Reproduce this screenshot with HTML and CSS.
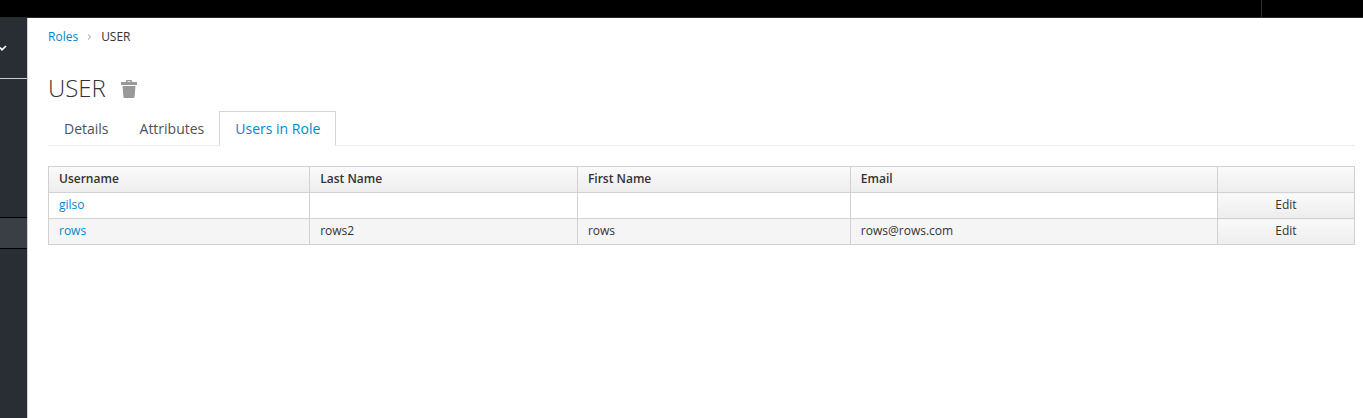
FILE: index.html
```html
<!DOCTYPE html>
<html lang="en">
<head>
<meta charset="utf-8">
<title>USER - Users in Role</title>
<link rel="stylesheet" href="styles.css">
</head>
<body>
<header class="topbar"><div class="topbar-user"></div></header>
<div class="layout">
  <nav class="sidebar" aria-label="Realm">
    <button class="realm-toggle" type="button" aria-label="Select realm">
      <svg width="8" height="8" viewBox="0 0 8 8" aria-hidden="true"><path d="M0 3.5 L2 5.8 L6 2" fill="none" stroke="#fff" stroke-width="1.7"/></svg>
    </button>
    <a class="nav-active" href="#" aria-label="Roles"></a>
  </nav>
  <main class="content">
    <ol class="breadcrumb">
      <li><a href="#">Roles</a></li>
      <li><svg class="separator" width="5" height="8" viewBox="0 0 5 8" aria-hidden="true"><path d="M1 1.5 L3.7 4 L1 6.5" fill="none" stroke="#9c9c9c"/></svg></li>
      <li>USER</li>
    </ol>
    <div class="title-row">
      <h1>USER</h1>
      <button class="delete" type="button" aria-label="Delete role">
        <svg width="16" height="18" viewBox="0 0 16 18" aria-hidden="true"><path fill="#999" fill-rule="evenodd" d="M0 2H5V1Q5 0 6 0H10Q11 0 11 1V2H16V5H0ZM6.5 1.3V2H9.5V1.3ZM1.5 6H14.5L13.5 17Q13.4 18 12.5 18H3.5Q2.6 18 2.5 17Z"/></svg>
      </button>
    </div>
    <ul class="tabs">
      <li><a class="tab" href="#">Details</a></li>
      <li><a class="tab" href="#">Attributes</a></li>
      <li><a class="tab active" href="#" aria-current="page">Users in Role</a></li>
    </ul>
    <table class="users">
      <colgroup><col class="col-username"><col class="col-last"><col class="col-first"><col class="col-email"><col class="col-action"></colgroup>
      <thead>
        <tr><th>Username</th><th>Last Name</th><th>First Name</th><th>Email</th><th></th></tr>
      </thead>
      <tbody>
        <tr><td><a href="#">gilso</a></td><td></td><td></td><td></td><td class="action"><button type="button">Edit</button></td></tr>
        <tr><td><a href="#">rows</a></td><td>rows2</td><td>rows</td><td>rows@rows.com</td><td class="action"><button type="button">Edit</button></td></tr>
      </tbody>
    </table>
  </main>
</div>
</body>
</html>
```
FILE: styles.css
```css
* {
  box-sizing: border-box;
}

body {
  display: flex;
  flex-direction: column;
  min-height: 100vh;
  margin: 0;
  background: #fff;
  color: #333;
  font: 12px/17px "Open Sans", sans-serif;
}

a {
  color: #0088ce;
  text-decoration: none;
}

button {
  border: 0;
  padding: 0;
  background: none;
  color: inherit;
  font: inherit;
  cursor: pointer;
}

.topbar {
  display: flex;
  justify-content: flex-end;
  height: 18px;
  background: #000;
  border-bottom: 1px solid #2b2b2b;
}

.topbar-user {
  width: 102px;
  border-left: 1px solid #2b2b2b;
}

.layout {
  display: flex;
  flex: 1;
}

.sidebar {
  flex: none;
  width: 28px;
  background: #292e34;
  border-right: 1px solid #d0d0d0;
}

.realm-toggle {
  display: flex;
  align-items: center;
  width: 100%;
  height: 61px;
  border-bottom: 1px solid #ccc;
}

.nav-active {
  display: block;
  height: 32px;
  margin-top: 138px;
  background: #393f45;
  border: solid #000;
  border-width: 1px 0;
}

.content {
  flex: 1;
  min-width: 0;
  padding: 10px 8px 20px 20px;
}

.breadcrumb {
  display: flex;
  gap: 9px;
  margin: 0;
  padding: 0;
  list-style: none;
}

.separator {
  display: block;
  margin-top: 5px;
}

.title-row {
  display: flex;
  align-items: center;
  gap: 15px;
  margin-top: 26px;
}

h1 {
  margin: 0;
  font-size: 24px;
  font-weight: 300;
  line-height: 34px;
}

.delete {
  padding-top: 2px;
}

.delete svg {
  display: block;
}

.tabs {
  display: flex;
  margin: 6px 0 20px;
  padding: 0;
  border-bottom: 1px solid #ededed;
  list-style: none;
}

.tabs li + li {
  margin-left: -1px;
}

.tab {
  display: block;
  margin-bottom: -1px;
  padding: 7px 15px 6px;
  border: 1px solid transparent;
  color: #4d5258;
  font-size: 14px;
  line-height: 20px;
}

.tab.active {
  background: #fff;
  border-color: #d5d5d5 #d5d5d5 #fff;
  color: #0088ce;
}

.users {
  width: 100%;
  table-layout: fixed;
  border-collapse: collapse;
}

.col-username { width: 20%; }
.col-last { width: 20.5%; }
.col-first { width: 20.9%; }
.col-email { width: 28.1%; }
.col-action { width: 10.5%; }

.users th,
.users td {
  height: 26px;
  padding: 3px 10px 5px;
  border: 1px solid #d1d1d1;
  text-align: left;
}

.users th {
  font-weight: 600;
}

.users thead tr,
.users .action {
  background: linear-gradient(#fafafa, #ededed);
}

.users tbody tr:nth-child(even) {
  background: #f5f5f5;
}

.users .action {
  text-align: center;
}

.action button {
  display: block;
  width: 100%;
}
```
